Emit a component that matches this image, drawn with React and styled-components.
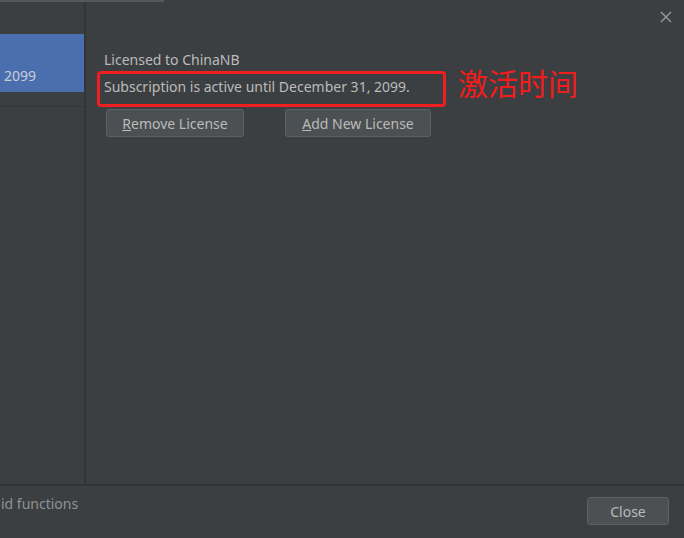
import React from 'react';
import styled, { createGlobalStyle } from 'styled-components';

const GlobalStyle = createGlobalStyle`
  html, body {
    margin: 0;
    padding: 0;
    background: #3c3f41;
  }
  body {
    font-family: "Noto Sans", "Liberation Sans", sans-serif;
    font-size: 14px;
    color: #bbbbbb;
  }
`;

const Window = styled.div`
  position: relative;
  width: 684px;
  height: 538px;
  background: #3c3f41;
  display: flex;
  flex-direction: column;
  overflow: hidden;
`;

const TopStrip = styled.div`
  height: 2px;
  width: 164px;
  background: #55585a;
  flex-shrink: 0;
`;

const Main = styled.div`
  flex: 1;
  display: flex;
  border-bottom: 2px solid #323435;
`;

const Sidebar = styled.div`
  width: 84px;
  flex-shrink: 0;
  border-right: 2px solid #323435;
  padding-top: 32px;
  display: flex;
  flex-direction: column;
`;

const SideItem = styled.div`
  height: 58px;
  background: ${p => (p.$selected ? '#4b6eaf' : 'transparent')};
  display: flex;
  align-items: flex-end;
  padding: 0 0 7px 4px;
  box-sizing: border-box;
  color: #c8cdd6;
  line-height: 18px;
`;

const SideSeparator = styled.div`
  margin-top: 14px;
  height: 1px;
  background: #323435;
`;

const Content = styled.div`
  flex: 1;
  padding: 49px 0 0 18px;
  display: flex;
  flex-direction: column;
`;

const Line = styled.div`
  height: 18px;
  line-height: 18px;
  margin-top: ${p => p.$gap || 0}px;
  white-space: nowrap;
`;

const ButtonRow = styled.div`
  display: flex;
  gap: 41px;
  margin-top: 13px;
  padding-left: 2px;
`;

const Button = styled.button`
  height: 28px;
  width: ${p => p.$w}px;
  padding: 0;
  background: #4c5052;
  border: 1px solid #5e6163;
  border-radius: 3px;
  color: #bbbbbb;
  font-family: inherit;
  font-size: 14px;
  u { text-decoration: underline; }
`;

const Highlight = styled.div`
  position: absolute;
  left: 97px;
  top: 71px;
  width: 343px;
  height: 30px;
  border: 3px solid #f01e1e;
  border-radius: 4px;
`;

const Note = styled.div`
  position: absolute;
  left: 458px;
  top: 63px;
  font-family: "Noto Sans CJK SC", sans-serif;
  font-size: 30px;
  line-height: 38px;
  color: #f21c1c;
`;

const CloseX = styled.svg`
  position: absolute;
  right: 12px;
  top: 11px;
`;

const Footer = styled.div`
  height: 52px;
  flex-shrink: 0;
  display: flex;
  align-items: flex-start;
  justify-content: space-between;
  padding: 11px 15px 0 1px;
  box-sizing: border-box;
`;

const FooterText = styled.div`
  margin-top: -2px;
  color: #8f9294;
  line-height: 18px;
`;

function App() {
  return (
    <Window>
      <GlobalStyle />
      <TopStrip />
      <Main>
        <Sidebar>
          <SideItem $selected>2099</SideItem>
          <SideSeparator />
        </Sidebar>
        <Content>
          <Line>Licensed to ChinaNB</Line>
          <Line $gap={9}>Subscription is active until December 31, 2099.</Line>
          <ButtonRow>
            <Button $w={138}><u>R</u>emove License</Button>
            <Button $w={146}><u>A</u>dd New License</Button>
          </ButtonRow>
        </Content>
      </Main>
      <Footer>
        <FooterText>id functions</FooterText>
        <Button $w={82}>Close</Button>
      </Footer>
      <Highlight />
      <Note>激活时间</Note>
      <CloseX width="12" height="12" viewBox="0 0 12 12">
        <path d="M1 1L11 11M11 1L1 11" stroke="#9a9c9e" strokeWidth="1.4" />
      </CloseX>
    </Window>
  );
}

export default App;
